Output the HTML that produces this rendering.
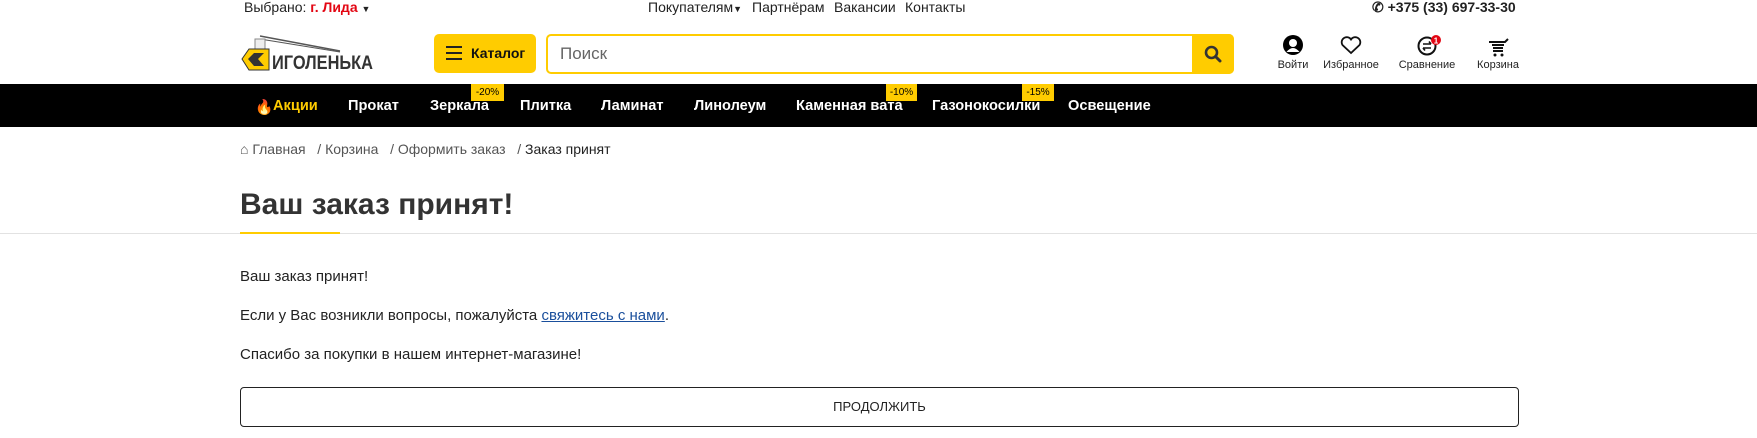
<!DOCTYPE html>
<html><head><meta charset="utf-8"><style>
*{margin:0;padding:0;box-sizing:border-box}
body{width:1757px;height:438px;overflow:hidden;background:#fff;font-family:"Liberation Sans",Arial,sans-serif;color:#222;position:relative}
.a{position:absolute;white-space:nowrap}
.top{font-size:14px;top:0;line-height:15px}
.nav{position:absolute;left:0;top:84px;width:1757px;height:43px;background:#000}
.ni{position:absolute;top:14px;color:#fff;font-weight:bold;font-size:14.6px}
.bd{position:absolute;top:0;height:17px;background:#fc0;color:#000;font-size:10px;line-height:17px;padding:0 3px;text-align:center}
.ic{position:absolute;font-size:11px;text-align:center;width:80px}
</style></head><body>
<div class="a top" style="left:244px">Выбрано: <b style="color:#e30613">г. Лида</b> <span style="font-size:9px">▼</span></div>
<div class="a top" style="left:648px">Покупателям<span style="font-size:9px">▼</span></div>
<div class="a top" style="left:752px">Партнёрам</div>
<div class="a top" style="left:834px">Вакансии</div>
<div class="a top" style="left:905px">Контакты</div>
<div class="a top" style="left:1372px;font-weight:bold">✆ +375 (33) 697-33-30</div>

<svg class="a" style="left:240px;top:33px" width="135" height="40" viewBox="0 0 135 40">
<path d="M20 3 L100 18" stroke="#555" stroke-width="1.5"/><path d="M20 6 L100 19" stroke="#555" stroke-width="1"/>
<rect x="15" y="6" width="10" height="10" fill="#eee" stroke="#888"/>
<polygon points="9,16 29,16 29,37 9,37 2,26" fill="#fc0" stroke="#333"/>
<polygon points="14,20 24,20 18,26 24,33 14,33 8,26" fill="#333"/>
<text x="32" y="36" font-family="Liberation Sans" font-weight="bold" font-size="19" fill="#333" textLength="101" lengthAdjust="spacingAndGlyphs">ИГОЛЕНЬКА</text>
</svg>

<div class="a" style="left:434px;top:34px;width:102px;height:39px;background:#fc0;border-radius:5px"></div>
<div class="a" style="left:446px;top:46px;width:16px;height:2px;background:#222;box-shadow:0 6px #222,0 12px #222"></div>
<div class="a" style="left:471px;top:45px;font-weight:bold;font-size:14px;color:#111">Каталог</div>
<div class="a" style="left:546px;top:34px;width:688px;height:40px;border:2px solid #fc0;border-radius:5px"></div>
<div class="a" style="left:560px;top:44px;font-size:17px;color:#666">Поиск</div>
<div class="a" style="left:1192px;top:34px;width:42px;height:40px;background:#fc0;border-radius:0 5px 5px 0"></div>
<svg class="a" style="left:1204px;top:45px" width="18" height="18"><circle cx="7.5" cy="7.5" r="5.5" fill="none" stroke="#333" stroke-width="2.6"/><path d="M11.5 11.5 L16 16" stroke="#333" stroke-width="3" stroke-linecap="round"/></svg>

<svg class="a" style="left:1283px;top:35px" width="20" height="20"><circle cx="10" cy="10" r="10" fill="#000"/><circle cx="10" cy="8" r="4" fill="#fff"/><path d="M3.5 17 Q10 9 16.5 17" fill="#fff"/></svg>
<div class="ic" style="left:1253px;top:59px">Войти</div>
<svg class="a" style="left:1340px;top:36px" width="22" height="19"><path d="M11 17 L2.5 9 A4.8 4.8 0 0 1 11 3.5 A4.8 4.8 0 0 1 19.5 9 Z" fill="none" stroke="#111" stroke-width="1.8"/></svg>
<div class="ic" style="left:1311px;top:59px">Избранное</div>
<svg class="a" style="left:1417px;top:35px" width="26" height="22"><circle cx="10" cy="11" r="8.5" fill="none" stroke="#111" stroke-width="2"/><path d="M6 9 H14 M12 6.5 L14 9 M14 13 H6 M8 15.5 L6 13" stroke="#111" stroke-width="1.6" fill="none"/><circle cx="19" cy="5" r="5" fill="#e30613"/><text x="19" y="8.5" font-size="8" fill="#fff" text-anchor="middle" font-weight="bold" font-family="Liberation Sans">1</text></svg>
<div class="ic" style="left:1387px;top:59px">Сравнение</div>
<svg class="a" style="left:1488px;top:38px" width="22" height="20"><path d="M1 4 H17 L20 1 M4 7 H16 M5 10 H15 M5 13 H15" stroke="#111" stroke-width="2" fill="none"/><circle cx="7" cy="17" r="1.5" fill="#111"/><circle cx="14" cy="17" r="1.5" fill="#111"/></svg>
<div class="ic" style="left:1458px;top:59px">Корзина</div>

<div class="nav">
<div class="ni" style="left:255px;color:#f60">🔥</div>
<div class="ni" style="left:273px;color:#fc0">Акции</div>
<div class="ni" style="left:348px">Прокат</div>
<div class="ni" style="left:430px">Зеркала</div>
<div class="bd" style="left:471px;width:33px">-20%</div>
<div class="ni" style="left:520px">Плитка</div>
<div class="ni" style="left:601px">Ламинат</div>
<div class="ni" style="left:694px">Линолеум</div>
<div class="ni" style="left:796px">Каменная вата</div>
<div class="bd" style="left:886px;width:31px">-10%</div>
<div class="ni" style="left:932px">Газонокосилки</div>
<div class="bd" style="left:1022px;width:32px">-15%</div>
<div class="ni" style="left:1068px">Освещение</div>
</div>

<div class="a" style="left:240px;top:141px;font-size:14px;color:#555">⌂ Главная &nbsp;&nbsp;/ Корзина &nbsp;&nbsp;/ Оформить заказ &nbsp;&nbsp;/ <span style="color:#222">Заказ принят</span></div>
<div class="a" style="left:240px;top:188px;font-size:30px;font-weight:bold;color:#333">Ваш заказ принят!</div>
<div class="a" style="left:0;top:233px;width:1757px;height:1px;background:#e2e2e2"></div>
<div class="a" style="left:240px;top:232px;width:100px;height:2px;background:#fc0"></div>

<div class="a" style="left:240px;top:268px;font-size:15px">Ваш заказ принят!</div>
<div class="a" style="left:240px;top:307px;font-size:15px">Если у Вас возникли вопросы, пожалуйста <u style="color:#1a4f9c">свяжитесь с нами</u>.</div>
<div class="a" style="left:240px;top:346px;font-size:15px">Спасибо за покупки в нашем интернет-магазине!</div>
<div class="a" style="left:240px;top:387px;width:1279px;height:40px;border:1px solid #222;border-radius:4px;text-align:center;line-height:38px;font-size:13px">ПРОДОЛЖИТЬ</div>
</body></html>
